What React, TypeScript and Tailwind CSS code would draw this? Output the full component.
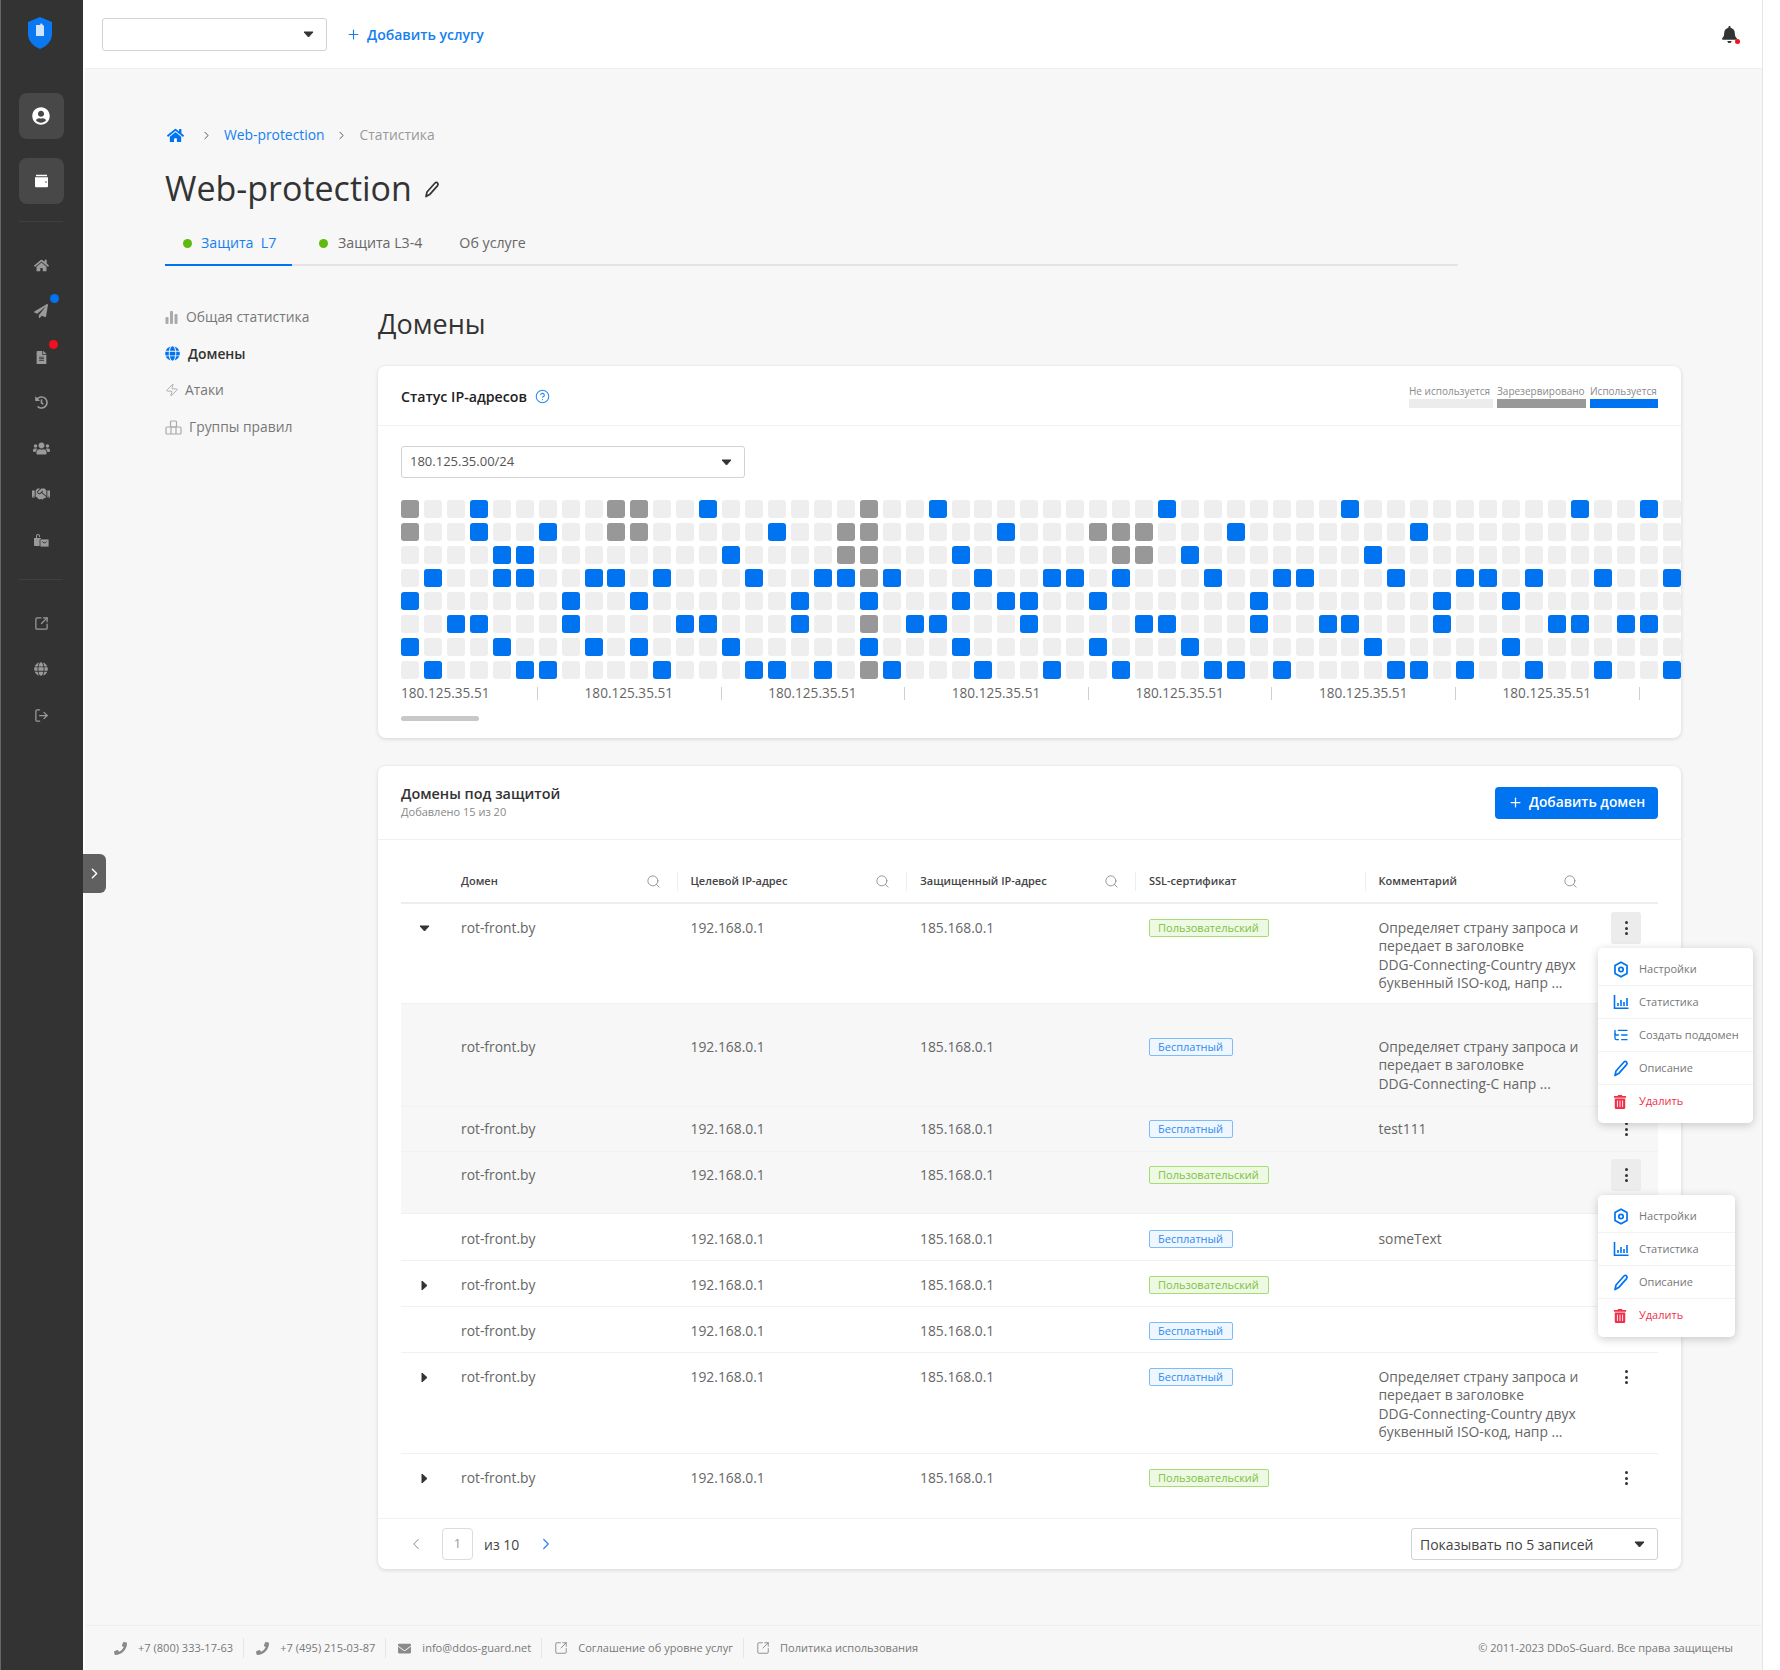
import React from 'react';
import { ChevronRight, ChevronLeft, CircleHelp, LogOut, Plus, Search, ListTree, SquareArrowOutUpRight, Zap } from 'lucide-react';
import { FaBell, FaEnvelope, FaFileAlt, FaGlobe, FaHandshake, FaHome, FaPaperPlane, FaPhoneAlt, FaTrashAlt, FaUserCircle, FaUsers, FaHistory } from 'react-icons/fa';

const BLUE = [
  [3, 13, 23, 33, 41, 51, 54],
  [3, 6, 16, 26, 36, 44],
  [4, 5, 14, 24, 34, 42],
  [1, 4, 5, 8, 9, 11, 15, 18, 19, 21, 25, 28, 29, 31, 35, 38, 39, 43, 46, 47, 49, 52, 55],
  [0, 7, 10, 17, 20, 24, 26, 27, 30, 37, 45, 48],
  [2, 3, 7, 12, 13, 17, 22, 23, 27, 32, 33, 37, 40, 41, 45, 50, 51, 53, 54],
  [0, 4, 8, 10, 14, 20, 24, 30, 34, 42, 48],
  [1, 5, 6, 11, 15, 16, 18, 21, 25, 28, 31, 35, 36, 38, 43, 44, 46, 49, 52, 55],
];
const GRAY = [[0, 9, 10, 20], [0, 9, 10, 19, 20, 30, 31, 32], [19, 20, 31, 32], [20], [], [20], [], [20]];

const LONG = ['Определяет страну запроса и', 'передает в заголовке', 'DDG-Connecting-Country двух', 'буквенный ISO-код, напр ...'];

type Row = {
  h: number;
  pt: number;
  arrow?: 'down' | 'right';
  badge: 'custom' | 'free';
  comment?: string[];
  shaded?: boolean;
  active?: boolean;
  dots?: boolean;
  menu?: 'full' | 'short';
};

const ROWS: Row[] = [
  { h: 100, pt: 15, arrow: 'down', badge: 'custom', comment: LONG, active: true, menu: 'full' },
  { h: 103, pt: 34, badge: 'free', shaded: true, comment: ['Определяет страну запроса и', 'передает в заголовке', 'DDG-Connecting-C напр ...'] },
  { h: 45, pt: 13, badge: 'free', shaded: true, comment: ['test111'], dots: true },
  { h: 62, pt: 14, badge: 'custom', shaded: true, active: true, menu: 'short' },
  { h: 47, pt: 16, badge: 'free', comment: ['someText'] },
  { h: 46, pt: 15, arrow: 'right', badge: 'custom' },
  { h: 46, pt: 15, badge: 'free' },
  { h: 101, pt: 15, arrow: 'right', badge: 'free', comment: LONG, dots: true },
  { h: 64, pt: 15, arrow: 'right', badge: 'custom', dots: true },
];

function Caret({ className = '' }: { className?: string }) {
  return (
    <svg width="11" height="7" viewBox="0 0 11 7" className={className}>
      <path d="M1 1h9L5.5 6z" fill="#333" stroke="#333" strokeLinejoin="round" />
    </svg>
  );
}

function GearIcon() {
  return (
    <svg width="16" height="17" viewBox="0 0 16 17" fill="none" stroke="#0073f0" strokeWidth="1.7">
      <path d="M8 1.2l6 3.4v7.8l-6 3.4-6-3.4V4.6z" strokeLinejoin="round" />
      <circle cx="8" cy="8.5" r="2.2" />
    </svg>
  );
}

function ChartIcon() {
  return (
    <svg width="16" height="16" viewBox="0 0 16 16" fill="none" stroke="#0073f0">
      <path d="M1.5 1v13.2h14" strokeWidth="1.6" />
      <path d="M5 12V9M8 12V6M11 12V8M14 12V4" strokeWidth="1.6" />
    </svg>
  );
}

function PenIcon({ color = '#0073f0' }: { color?: string }) {
  return (
    <svg width="16" height="17" viewBox="0 0 16 17" fill="none" stroke={color} strokeWidth="1.7" strokeLinejoin="round">
      <path d="M2 15.5l1-4.5 8-9c.8-.8 2-.8 2.6 0 .6.7.6 1.8 0 2.6l-8 9z" />
    </svg>
  );
}

function Popup({ kind }: { kind: 'full' | 'short' }) {
  const items = [
    { icon: <GearIcon />, label: 'Настройки' },
    { icon: <ChartIcon />, label: 'Статистика' },
    ...(kind === 'full' ? [{ icon: <ListTree size={16} color="#0073f0" strokeWidth={2} />, label: 'Создать поддомен' }] : []),
    { icon: <PenIcon />, label: 'Описание' },
    { icon: <FaTrashAlt size={14} color="#f0304a" />, label: 'Удалить', danger: true },
  ];
  return (
    <div
      className={`absolute z-10 left-[1197px] flex flex-col rounded-[5px] bg-white py-[5px] shadow-[0_2px_10px_rgba(0,0,0,0.2)] ${
        kind === 'full' ? 'top-[44px] w-[155px]' : 'top-[43px] w-[137px]'
      }`}
    >
      {items.map((it, i) => (
        <div
          key={it.label}
          className={`flex h-[33px] items-center pl-[15px] ${i < items.length - 1 ? 'border-b border-[#f3f3f3]' : ''}`}
        >
          <span className="flex w-[26px] items-center">{it.icon}</span>
          <span className={`text-[11px] ${it.danger ? 'text-[#f0304a]' : 'text-[#777]'}`}>{it.label}</span>
        </div>
      ))}
    </div>
  );
}

function Badge({ kind }: { kind: 'custom' | 'free' }) {
  return kind === 'custom' ? (
    <span className="flex h-[18px] w-[120px] items-center rounded-[2px] border border-[#a5dc77] bg-[#eef9e3] pl-[8px] text-[11px] text-[#7cc142]">
      Пользовательский
    </span>
  ) : (
    <span className="flex h-[18px] w-[84px] items-center rounded-[2px] border border-[#7ebcf8] bg-[#eef6ff] pl-[8px] text-[11px] text-[#2f8cf0]">
      Бесплатный
    </span>
  );
}

function Kebab({ active, visible }: { active?: boolean; visible?: boolean }) {
  if (!active && !visible) return null;
  return (
    <div
      className={`ml-[18px] -mt-[7px] flex h-[32px] w-[30px] flex-col items-center justify-center gap-[2.5px] rounded-[3px] ${
        active ? 'bg-[#ececec]' : ''
      }`}
    >
      <i className="block h-[3px] w-[3px] rounded-full bg-[#333]" />
      <i className="block h-[3px] w-[3px] rounded-full bg-[#333]" />
      <i className="block h-[3px] w-[3px] rounded-full bg-[#333]" />
    </div>
  );
}

function Sidebar() {
  const icon = 'text-[#9a9a9a]';
  return (
    <aside className="flex h-full w-[83px] shrink-0 flex-col items-center border-l border-[#666] bg-[#333] pr-[2px]">
      <svg width="28" height="34" viewBox="0 0 28 34" className="mt-[16px] -ml-[2px]">
        <path d="M14 1l12 5v12c0 7-5 12-12 15C7 30 2 25 2 18V6z" fill="#0a78f0" />
        <path d="M10 9h4l1-2 3 3v10H10z" fill="#cfe4fb" />
      </svg>
      <div className="mt-[43px] flex h-[46px] w-[45px] items-center justify-center rounded-[8px] bg-[#484848]">
        <FaUserCircle size={18} color="#fff" />
      </div>
      <div className="mt-[19px] flex h-[46px] w-[45px] items-center justify-center rounded-[8px] bg-[#484848]">
        <svg width="15" height="14" viewBox="0 0 15 14">
          <path d="M1 3.2h13v9a1 1 0 0 1-1 1H2a1 1 0 0 1-1-1zM2 .8h11v1.4H2z" fill="#fff" />
          <circle cx="12" cy="8" r="0.8" fill="#484848" />
        </svg>
      </div>
      <div className="mt-[17px] h-px w-[44px] bg-[#3f3f3f]" />
      <div className={`flex flex-col items-center ${icon}`}>
        <div className="mt-[33px] flex h-[20px] items-center"><FaHome size={15} /></div>
        <div className="relative mt-[26px] flex h-[20px] items-center">
          <FaPaperPlane size={14} />
          <span className="absolute -right-[11px] -top-[7px] h-[9px] w-[9px] rounded-full bg-[#0073f0]" />
        </div>
        <div className="relative mt-[26px] flex h-[20px] items-center">
          <FaFileAlt size={13} />
          <span className="absolute -right-[10px] -top-[7px] h-[9px] w-[9px] rounded-full bg-[#f0101e]" />
        </div>
        <div className="mt-[25px] flex h-[20px] items-center"><FaHistory size={13} /></div>
        <div className="mt-[26px] flex h-[20px] items-center"><FaUsers size={17} /></div>
        <div className="mt-[26px] flex h-[20px] items-center"><FaHandshake size={18} /></div>
        <div className="mt-[26px] flex h-[20px] items-center">
          <svg width="16" height="15" viewBox="0 0 16 15" fill="currentColor">
            <path d="M1 5h7v8H2a1 1 0 0 1-1-1zM3 5V3a2 2 0 0 1 4 0v1H6V3a1 1 0 0 0-2 0v2z" />
            <rect x="7" y="6" width="9" height="8" rx="1" stroke="#333" strokeWidth="0.8" />
            <path d="M9.5 8.5c.4 1.8 3.6 1.8 4 0" stroke="#333" fill="none" />
          </svg>
        </div>
      </div>
      <div className="mt-[29px] h-px w-[44px] bg-[#3f3f3f]" />
      <div className={`flex flex-col items-center ${icon}`}>
        <div className="mt-[33px] flex h-[20px] items-center"><SquareArrowOutUpRight size={15} strokeWidth={2} /></div>
        <div className="mt-[26px] flex h-[20px] items-center"><FaGlobe size={14} /></div>
        <div className="mt-[26px] flex h-[20px] items-center"><LogOut size={15} strokeWidth={2} /></div>
      </div>
    </aside>
  );
}

function IpCard() {
  return (
    <section className="h-[372px] w-[1303px] rounded-[8px] bg-white shadow-[0_1px_4px_rgba(0,0,0,0.14)]">
      <header className="flex h-[60px] items-center justify-between border-b border-[#f1f1f1] pl-[23px] pr-[23px]">
        <div className="mt-[2px] flex items-center gap-[8px]">
          <span className="text-[14.2px] font-semibold text-[#222]">Статус IP-адресов</span>
          <CircleHelp size={15} color="#2f8cf0" strokeWidth={1.8} />
        </div>
        <div className="flex gap-[4px] text-[10px] leading-[14px] text-[#8a8a8a]">
          <div className="w-[84px]">
            <div className="whitespace-nowrap">Не используется</div>
            <div className="mt-[1px] h-[9px] bg-[#ececec]" />
          </div>
          <div className="w-[89px]">
            <div className="whitespace-nowrap">Зарезервировано</div>
            <div className="mt-[1px] h-[9px] bg-[#999]" />
          </div>
          <div className="w-[68px]">
            <div className="whitespace-nowrap">Используется</div>
            <div className="mt-[1px] h-[9px] bg-[#0073f0]" />
          </div>
        </div>
      </header>
      <div className="pl-[23px] pt-[20px]">
        <div className="flex h-[32px] w-[344px] items-center justify-between rounded-[3px] border border-[#d2d2d2] pl-[8px] pr-[12px] text-[13px] text-[#555]">
          180.125.35.00/24
          <Caret />
        </div>
        <div className="mt-[22px] grid grid-cols-[repeat(56,18px)] gap-x-[4.95px] gap-y-[5px]">
          {BLUE.map((blue, r) =>
            Array.from({ length: 56 }, (_, c) => (
              <div
                key={`${r}-${c}`}
                className={`h-[18px] rounded-[3px] ${
                  blue.includes(c) ? 'bg-[#0073f0]' : GRAY[r].includes(c) ? 'bg-[#989898]' : 'bg-[#eeeeee]'
                }`}
              />
            )),
          )}
        </div>
        <div className="mt-[4px] flex h-[20px]">
          {Array.from({ length: 7 }, (_, i) => (
            <div key={i} className="flex w-[183.6px] shrink-0 items-center">
              <span className="w-[136px] text-[13.6px] text-[#666]">180.125.35.51</span>
              <span className="h-[13px] w-px bg-[#cfcfcf]" />
            </div>
          ))}
        </div>
        <div className="mt-[13px] h-[5px] w-[78px] rounded-full bg-[#c8c8c8]" />
      </div>
    </section>
  );
}

function HeadCell({ label, search, first }: { label: string; search?: boolean; first?: boolean }) {
  return (
    <div className={`flex h-[19px] items-center justify-between pr-[16px] ${first ? 'pl-[14px]' : 'border-l border-[#eeeeee] pl-[13px]'}`}>
      <span className="text-[11px] font-semibold text-[#444]">{label}</span>
      {search && <Search size={15} color="#8a8a8a" strokeWidth={1.4} />}
    </div>
  );
}

const TABLE_COLS = 'grid grid-cols-[46px_229.5px_229.5px_229px_229.5px_229px_1fr]';

function DomainsCard() {
  return (
    <section className="mt-[28px] w-[1303px] rounded-[8px] bg-white shadow-[0_1px_4px_rgba(0,0,0,0.14)]">
      <header className="flex h-[74px] items-center justify-between border-b border-[#f1f1f1] pl-[23px] pr-[23px]">
        <div className="-mt-[3px]">
          <div className="text-[14.4px] font-semibold leading-[20px] text-[#333]">Домены под защитой</div>
          <div className="text-[11px] leading-[15px] text-[#888]">Добавлено 15 из 20</div>
        </div>
        <button className="flex h-[32px] w-[163px] items-center justify-center gap-[6px] rounded-[4px] bg-[#0073f0] text-[13.8px] font-semibold text-white">
          <Plus size={15} strokeWidth={2} />
          Добавить домен
        </button>
      </header>

      <div className="pl-[23px] pr-[23px]">
        <div className={`${TABLE_COLS} mt-[20px] h-[44px] items-center border-b-2 border-[#eeeeee]`}>
          <div />
          <HeadCell label="Домен" search first />
          <HeadCell label="Целевой IP-адрес" search />
          <HeadCell label="Защищенный IP-адрес" search />
          <HeadCell label="SSL-сертификат" />
          <HeadCell label="Комментарий" search />
        </div>

        {ROWS.map((row, i) => (
          <div
            key={i}
            style={{ height: row.h, paddingTop: row.pt }}
            className={`relative ${TABLE_COLS} text-[13.85px] leading-[18.33px] text-[#666] ${row.shaded ? 'bg-[#f7f7f7]' : ''} ${
              i < ROWS.length - 1 ? 'border-b border-[#f1f1f1]' : ''
            }`}
          >
            <div className="flex h-[18px] items-center justify-center">
              {row.arrow && <Caret className={row.arrow === 'right' ? '-rotate-90' : ''} />}
            </div>
            <div className="pl-[14px]">rot-front.by</div>
            <div className="pl-[14px]">192.168.0.1</div>
            <div className="pl-[14px]">185.168.0.1</div>
            <div className="pl-[14px]">
              <Badge kind={row.badge} />
            </div>
            <div className="pl-[14px]">
              {row.comment?.map((line) => (
                <div key={line} className="whitespace-nowrap">{line}</div>
              ))}
            </div>
            <div className="absolute left-[1192px]" style={{ top: row.pt }}>
              <Kebab active={row.active} visible={row.dots} />
            </div>
            {row.menu && <Popup kind={row.menu} />}
          </div>
        ))}
      </div>

      <footer className="flex h-[51px] items-center justify-between border-t border-[#f1f1f1] pl-[23px] pr-[23px]">
        <div className="flex items-center text-[14px] text-[#444]">
          <ChevronLeft size={18} color="#999" strokeWidth={1.4} className="ml-[6px]" />
          <span className="ml-[17px] flex h-[32px] w-[31px] items-center justify-center rounded-[4px] border border-[#dcdcdc] text-[13px] text-[#999]">1</span>
          <span className="ml-[11px]">из 10</span>
          <ChevronRight size={18} color="#2f80ed" strokeWidth={1.6} className="ml-[18px]" />
        </div>
        <div className="flex h-[32px] w-[247px] items-center justify-between rounded-[3px] border border-[#d2d2d2] pl-[8px] pr-[12px] text-[14px] text-[#444]">
          Показывать по 5 записей
          <Caret />
        </div>
      </footer>
    </section>
  );
}

function FooterItem({ icon, label, last }: { icon: React.ReactNode; label: string; last?: boolean }) {
  return (
    <div className={`flex h-[20px] items-center pr-[10px] ${last ? '' : 'border-r border-[#e6e6e6]'} ml-[12px]`}>
      <span className="flex w-[24px] items-center text-[#8a8a8a]">{icon}</span>
      <span className="whitespace-nowrap text-[11.05px] text-[#777]">{label}</span>
    </div>
  );
}

function Phone() {
  return <FaPhoneAlt size={13} className="-scale-x-100" />;
}

export default function App() {
  return (
    <div className="relative flex h-[1670px] w-[1780px] overflow-hidden bg-white font-['Open_Sans',sans-serif]">
      <Sidebar />
      <button className="absolute left-[83px] top-[854px] z-10 flex h-[39px] w-[23px] items-center justify-center rounded-r-[6px] bg-[#606060]">
        <ChevronRight size={17} color="#fff" strokeWidth={2} />
      </button>

      <main className="flex h-full w-[1679px] shrink-0 flex-col border-l-2 border-white bg-[#f7f7f7]">
        <div className="flex h-[69px] shrink-0 items-center justify-between border-b border-[#f0f0f0] bg-white pl-[17px] pr-[24px]">
          <div className="flex items-center">
            <div className="flex h-[33px] w-[225px] items-center justify-end rounded-[3px] border border-[#d2d2d2] pr-[12px]">
              <Caret />
            </div>
            <div className="ml-[19px] flex items-center gap-[6px] text-[14px] font-semibold text-[#1480f0]">
              <Plus size={15} strokeWidth={1.8} />
              Добавить услугу
            </div>
          </div>
          <div className="relative">
            <FaBell size={17} color="#333" />
            <span className="absolute -bottom-[1px] -right-[2px] h-[5px] w-[5px] rounded-full bg-[#f0101e]" />
          </div>
        </div>

        <div className="pl-[80px]">
          <nav className="ml-[2px] mt-[56px] flex h-[20px] items-center text-[13.85px]">
            <FaHome size={17} color="#0073f0" className="mr-[3px]" />
            <ChevronRight size={13} color="#555" strokeWidth={1.8} className="ml-[13px]" />
            <span className="ml-[11px] text-[#1480f0]">Web-protection</span>
            <ChevronRight size={13} color="#555" strokeWidth={1.8} className="ml-[10px]" />
            <span className="ml-[12px] text-[#999]">Статистика</span>
          </nav>

          <div className="mt-[21px] flex h-[44px] items-center">
            <h1 className="text-[34px] font-medium leading-[44px] text-[#333]">Web-protection</h1>
            <span className="ml-[12px] mt-[2px]"><PenIcon color="#333" /></span>
          </div>

          <div className="mt-[10px] flex h-[46px] w-[1293px] border-b-2 border-[#e4e4e4] pt-[2px] text-[14.2px]">
            <div className="-mb-[2px] flex w-[127px] items-center border-b-2 border-[#0073f0] pl-[18px] font-medium text-[#1480f0]">
              <span className="mr-[9px] h-[9px] w-[9px] rounded-full bg-[#5fb90f]" />
              Защита&nbsp;&nbsp;L7
            </div>
            <div className="ml-[27px] flex items-center font-medium text-[#666]">
              <span className="mr-[10px] h-[9px] w-[9px] rounded-full bg-[#5fb90f]" />
              Защита L3-4
            </div>
            <div className="ml-[37px] flex items-center font-medium text-[#666]">Об услуге</div>
          </div>

          <div className="flex">
            <ul className="mt-[33px] w-[213px] shrink-0 text-[13.85px] text-[#777]">
              <li className="flex h-[36.6px] items-center">
                <svg width="14" height="14" viewBox="0 0 14 14" fill="#aaa" className="mr-[7px]">
                  <rect x="0.5" y="7" width="3" height="7" rx="1" />
                  <rect x="5" y="1" width="3" height="13" rx="1" />
                  <rect x="9.5" y="4" width="3" height="10" rx="1" />
                </svg>
                Общая статистика
              </li>
              <li className="flex h-[36.6px] items-center font-semibold text-[#333]">
                <FaGlobe size={15} color="#0073f0" className="mr-[8px]" />
                Домены
              </li>
              <li className="flex h-[36.6px] items-center">
                <Zap size={14} color="#aaa" strokeWidth={1.6} className="mr-[6px]" />
                Атаки
              </li>
              <li className="flex h-[36.6px] items-center">
                <svg width="17" height="15" viewBox="0 0 17 15" fill="none" stroke="#aaa" strokeWidth="1.2" className="mr-[7px]">
                  <rect x="1" y="7" width="15" height="7" rx="1" />
                  <rect x="5.5" y="1" width="6" height="6" rx="1" />
                  <path d="M6 7v7M11 7v7" />
                </svg>
                Группы правил
              </li>
            </ul>
            <div>
              <h2 className="mt-[40px] text-[27px] font-medium leading-[36px] text-[#333]">Домены</h2>
              <div className="mt-[24px]">
                <IpCard />
                <DomainsCard />
              </div>
            </div>
          </div>
        </div>

        <footer className="mt-auto flex h-[45px] shrink-0 items-center justify-between border-t border-[#efefef] pl-[17px] pr-[29px]">
          <div className="flex items-center">
            <FooterItem icon={<Phone />} label="+7 (800) 333-17-63" />
            <FooterItem icon={<Phone />} label="+7 (495) 215-03-87" />
            <FooterItem icon={<FaEnvelope size={13} />} label="info@ddos-guard.net" />
            <FooterItem icon={<SquareArrowOutUpRight size={14} strokeWidth={1.6} />} label="Соглашение об уровне услуг" />
            <FooterItem icon={<SquareArrowOutUpRight size={14} strokeWidth={1.6} />} label="Политика использования" last />
          </div>
          <span className="text-[11px] text-[#777]">© 2011-2023 DDoS-Guard. Все права защищены</span>
        </footer>
      </main>

      <div className="h-full flex-1 border-l border-[#e5e5e5] bg-white" />
    </div>
  );
}
